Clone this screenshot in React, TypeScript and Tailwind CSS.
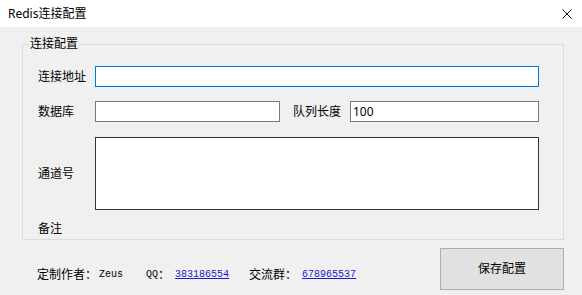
const cjk = "font-['Noto_Sans','Noto_Sans_CJK_SC',sans-serif]";
const mono = "font-['Liberation_Mono','Noto_Sans_CJK_SC',monospace]";

const Label = ({ text, className = "" }: { text: string; className?: string }) => (
  <span className={`w-[57px] shrink-0 text-[12px] leading-[16px] text-black ${className}`}>{text}</span>
);

const App = () => {
  return (
    <div className={`w-[582px] h-[295px] overflow-hidden bg-[#f0f0f0] ${cjk}`}>
      {/* title bar */}
      <div className="h-[27px] bg-white flex items-center pl-[8px] pr-[10px]">
        <span className="text-[12px] leading-[16px] text-black">Redis连接配置</span>
        <svg className="ml-auto" width="10" height="10" viewBox="0 0 10 10">
          <path d="M0.5 0.5 L9.5 9.5 M9.5 0.5 L0.5 9.5" stroke="#111" strokeWidth="1" fill="none" />
        </svg>
      </div>

      <div className="pt-[17px] pl-[22px]">
        {/* group box */}
        <div className="relative w-[542px] h-[196px] border border-[#dcdcdc] pt-[21px] pl-[15px]">
          <span className="absolute -top-[9px] left-[6px] bg-[#f0f0f0] px-[1px] text-[12px] leading-[16px] text-black">
            连接配置
          </span>

          <div className="flex items-center h-[21px]">
            <Label text="连接地址" />
            <input className="w-[444px] h-[21px] bg-white border border-[#0078d7] outline-none px-[2px] text-[12px]" />
          </div>

          <div className="flex items-center h-[21px] mt-[14px]">
            <Label text="数据库" />
            <input className="w-[185px] h-[21px] bg-white border border-[#7a7a7a] outline-none px-[2px] text-[12px]" />
            <Label text="队列长度" className="ml-[13px]" />
            <input
              defaultValue="100"
              className="w-[189px] h-[21px] bg-white border border-[#7a7a7a] outline-none px-[2px] text-[12px] text-black"
            />
          </div>

          <div className="flex items-center mt-[15px]">
            <Label text="通道号" />
            <textarea className="w-[444px] h-[73px] bg-white border border-[#333333] outline-none resize-none" />
          </div>

          <div className="flex mt-[11px]">
            <Label text="备注" />
          </div>
        </div>

        {/* footer */}
        <div className="flex items-start w-[542px]">
          <div className="mt-[27px] pl-[15px] flex items-center text-[12px] leading-[16px] text-black">
            <span>定制作者：</span>
            <span className={`${mono} text-[10px] ml-[2px]`}>Zeus</span>
            <span className={`${mono} text-[10px] ml-[23px]`}>QQ</span>
            <span>：</span>
            <a href="#" className={`${mono} text-[10px] underline text-[#1b1bc7] ml-[5px]`}>383186554</a>
            <span className="ml-[20px]">交流群：</span>
            <a href="#" className={`${mono} text-[10px] underline text-[#1b1bc7] ml-[5px]`}>678965537</a>
          </div>
          <button className="ml-auto mt-[8px] w-[124px] h-[42px] bg-[#e1e1e1] border border-[#adadad] text-[12px] text-black">
            保存配置
          </button>
        </div>
      </div>
    </div>
  );
};

export default App;
